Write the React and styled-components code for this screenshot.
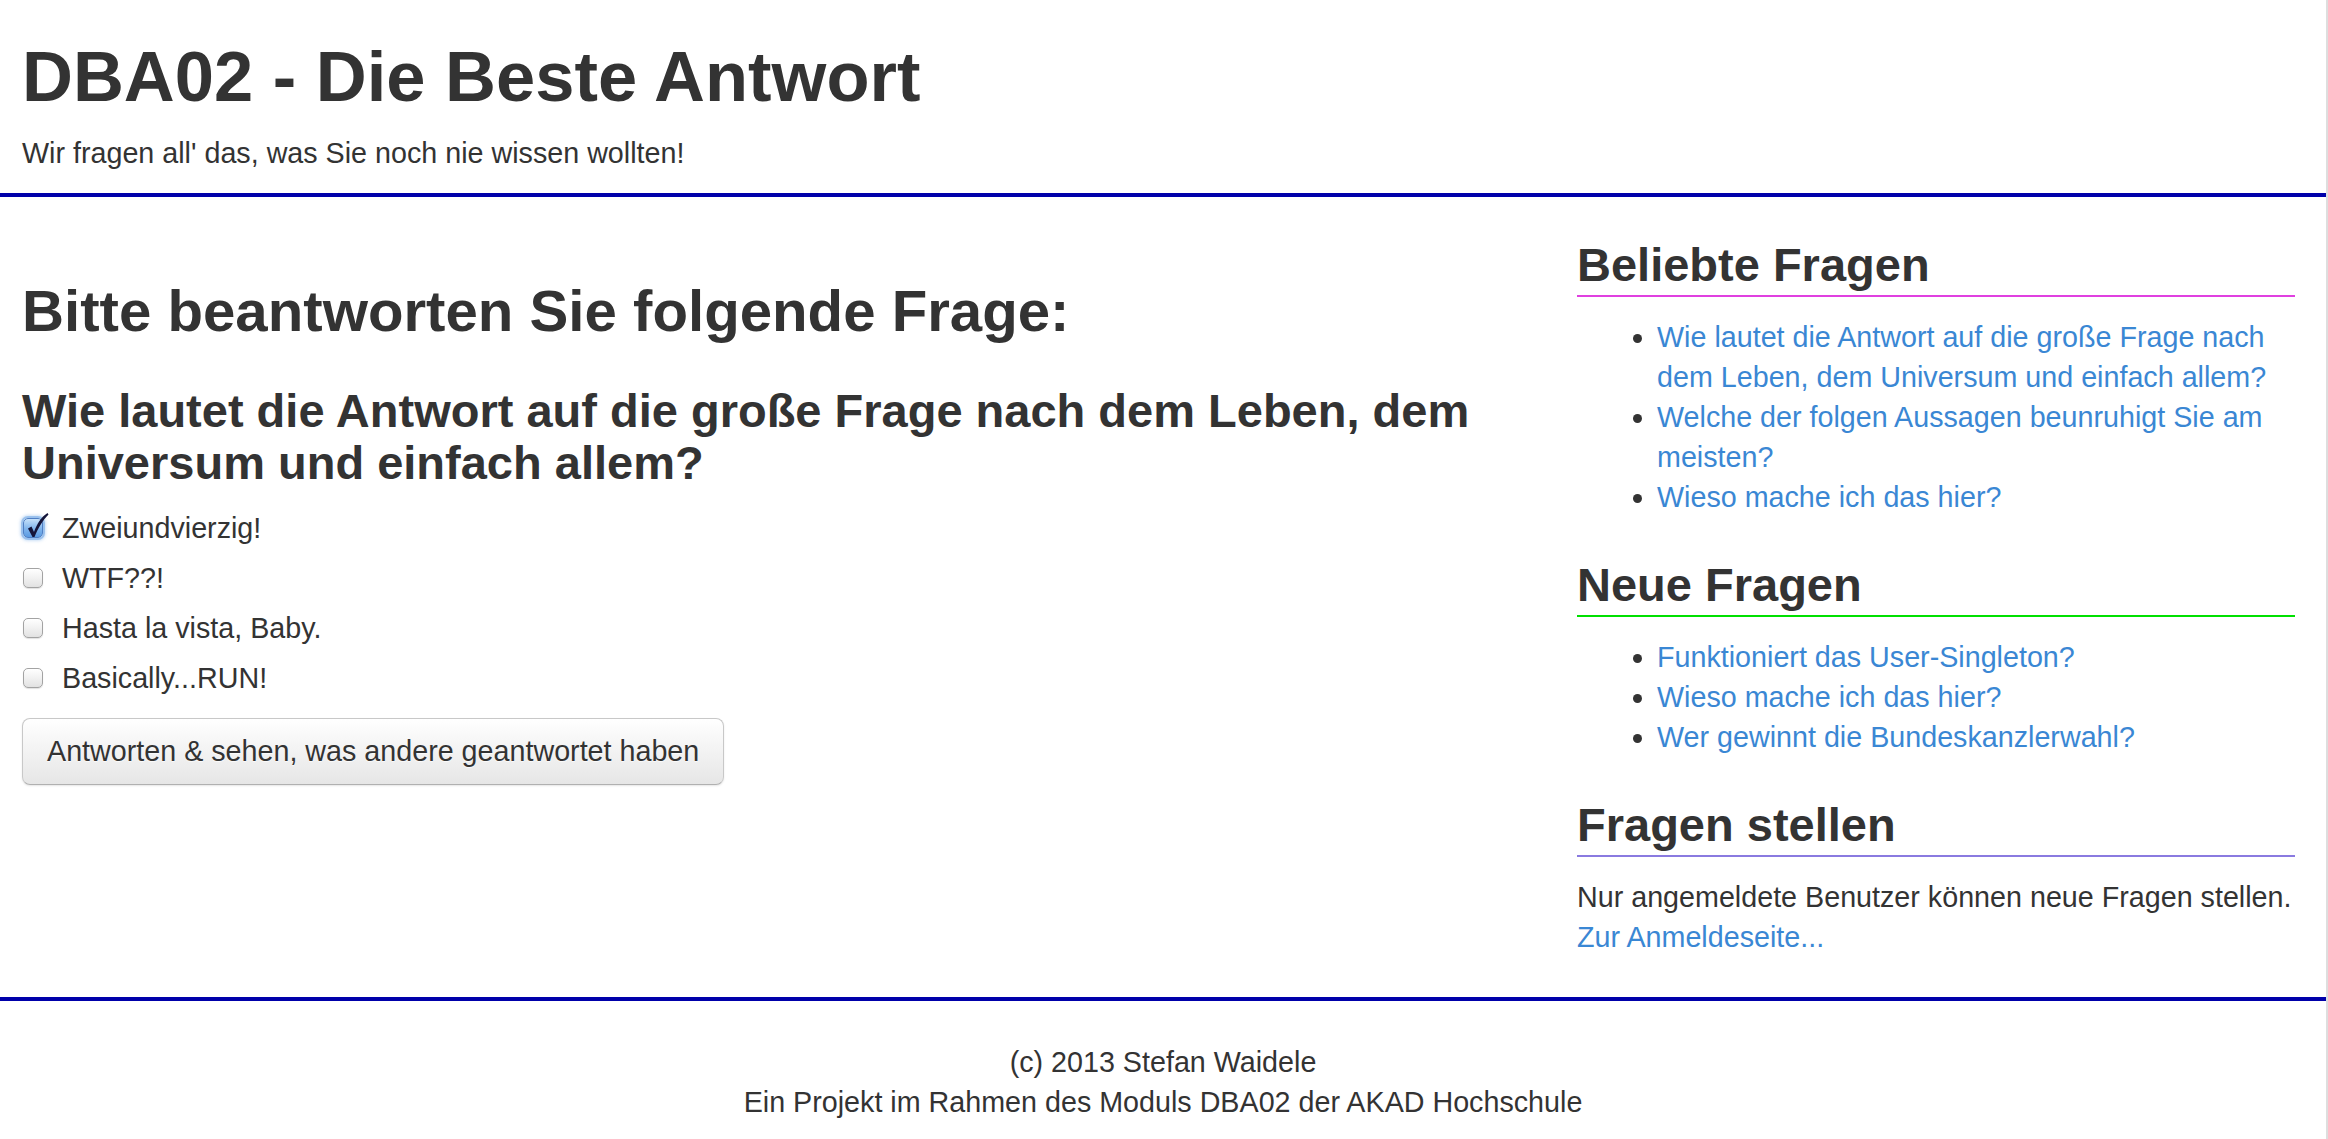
import React from 'react'
import styled, { createGlobalStyle } from 'styled-components'

const GlobalStyle = createGlobalStyle`
  html, body {
    margin: 0;
    padding: 0;
    background: #fff;
  }
  body {
    font-family: "Liberation Sans", Arial, Helvetica, sans-serif;
    font-size: 28.7px;
    line-height: 40px;
    color: #333;
  }
  * { box-sizing: border-box; }
`

const Page = styled.div`
  min-height: 100vh;
  border-right: 2px solid #dedede;
  display: flex;
  flex-direction: column;
`

const Header = styled.header`
  padding: 37px 22px 20px;
  border-bottom: 4px solid #0000aa;
`

const Title = styled.h1`
  margin: 0;
  font-size: 70.5px;
  line-height: 80px;
  font-weight: bold;
`

const Tagline = styled.p`
  margin: 16px 0 0;
`

const Row = styled.div`
  display: grid;
  grid-template-columns: 1fr 718px;
  column-gap: 47px;
  align-items: start;
  padding: 0 31px 40px 22px;
`

const Main = styled.main`
  display: flex;
  flex-direction: column;
  align-items: flex-start;
`

const PageHeading = styled.h2`
  margin: 74px 0 0;
  font-size: 58.2px;
  line-height: 80px;
  font-weight: bold;
`

const Question = styled.h3`
  margin: 34px 0 0;
  font-size: 47px;
  line-height: 52px;
  font-weight: bold;
`

const Answers = styled.div`
  margin-top: 19px;
  display: flex;
  flex-direction: column;
  gap: 10px;
`

const Answer = styled.label`
  display: flex;
  align-items: center;
  gap: 19px;
  height: 40px;
  padding-left: 1px;
  cursor: pointer;
`

const Box = styled.span`
  position: relative;
  width: 20px;
  height: 20px;
  flex: none;
  border-radius: 5px;
  border: 1px solid ${({ checked }) => (checked ? '#4f7fc4' : '#a3a3a3')};
  background: ${({ checked }) =>
    checked
      ? 'linear-gradient(#c6e1fa, #7fb4ec 55%, #5b9be2)'
      : 'linear-gradient(#ffffff, #f1f1f1 50%, #e2e2e2)'};
  box-shadow: ${({ checked }) =>
    checked
      ? '0 0 0 2px rgba(110, 165, 230, 0.55), 0 0 3px 3px rgba(110, 165, 230, 0.35)'
      : 'inset 0 1px 0 #fff, 0 1px 1px rgba(0, 0, 0, 0.12)'};
`

const Tick = styled.svg`
  position: absolute;
  left: 1px;
  top: -7px;
  width: 24px;
  height: 26px;
`

const SubmitButton = styled.button`
  margin-top: 20px;
  font-family: inherit;
  font-size: inherit;
  line-height: 40px;
  color: #333;
  padding: 12px 24px 13px;
  border: 1px solid #c8c8c8;
  border-bottom-color: #b0b0b0;
  border-radius: 8px;
  background: linear-gradient(#ffffff, #e6e6e6);
  text-shadow: 0 1px 1px rgba(255, 255, 255, 0.75);
  box-shadow: inset 0 1px 0 rgba(255, 255, 255, 0.2), 0 1px 2px rgba(0, 0, 0, 0.1);
  cursor: pointer;
`

const Sidebar = styled.aside`
  display: flex;
  flex-direction: column;
`

const SideHeading = styled.h3`
  margin: 42px 0 0;
  padding-bottom: 4px;
  font-size: 47px;
  line-height: 52px;
  font-weight: bold;
  border-bottom: 2px solid ${({ accent }) => accent};
`

const LinkList = styled.ul`
  margin: 20px 0 0;
  padding-left: 80px;
`

const Link = styled.a`
  color: #3a87d4;
  text-decoration: none;
`

const Note = styled.p`
  margin: 20px 0 0;
`

const Footer = styled.footer`
  border-top: 4px solid #0000aa;
  padding: 41px 0 17px;
  text-align: center;
`

const answers = [
  { text: 'Zweiundvierzig!', checked: true },
  { text: 'WTF??!' },
  { text: 'Hasta la vista, Baby.' },
  { text: 'Basically...RUN!' }
]

const popular = [
  'Wie lautet die Antwort auf die große Frage nach dem Leben, dem Universum und einfach allem?',
  'Welche der folgen Aussagen beunruhigt Sie am meisten?',
  'Wieso mache ich das hier?'
]

const recent = [
  'Funktioniert das User-Singleton?',
  'Wieso mache ich das hier?',
  'Wer gewinnt die Bundeskanzlerwahl?'
]

export default function App () {
  return (
    <Page>
      <GlobalStyle />
      <Header>
        <Title>DBA02 - Die Beste Antwort</Title>
        <Tagline>Wir fragen all' das, was Sie noch nie wissen wollten!</Tagline>
      </Header>
      <Row>
        <Main>
          <PageHeading>Bitte beantworten Sie folgende Frage:</PageHeading>
          <Question>Wie lautet die Antwort auf die große Frage nach dem Leben, dem Universum und einfach allem?</Question>
          <Answers>
            {answers.map(a => (
              <Answer key={a.text}>
                <Box checked={a.checked}>
                  {a.checked && (
                    <Tick viewBox='0 0 24 26'>
                      <path d='M3 16.5 L6.5 14.5 L9 20 C12 12 16 5 22.5 1 L23.5 2.5 C18 8 13 16 9.5 25 L7.5 25 Z' fill='#15153a' />
                    </Tick>
                  )}
                </Box>
                {a.text}
              </Answer>
            ))}
          </Answers>
          <SubmitButton>Antworten &amp; sehen, was andere geantwortet haben</SubmitButton>
        </Main>
        <Sidebar>
          <SideHeading accent='#e040e0'>Beliebte Fragen</SideHeading>
          <LinkList>
            {popular.map(q => <li key={q}><Link href='#'>{q}</Link></li>)}
          </LinkList>
          <SideHeading accent='#00e000'>Neue Fragen</SideHeading>
          <LinkList>
            {recent.map(q => <li key={q}><Link href='#'>{q}</Link></li>)}
          </LinkList>
          <SideHeading accent='#8a7ae0'>Fragen stellen</SideHeading>
          <Note>
            Nur angemeldete Benutzer können neue Fragen stellen.<br />
            <Link href='#'>Zur Anmeldeseite...</Link>
          </Note>
        </Sidebar>
      </Row>
      <Footer>
        (c) 2013 Stefan Waidele<br />
        Ein Projekt im Rahmen des Moduls DBA02 der AKAD Hochschule
      </Footer>
    </Page>
  )
}
